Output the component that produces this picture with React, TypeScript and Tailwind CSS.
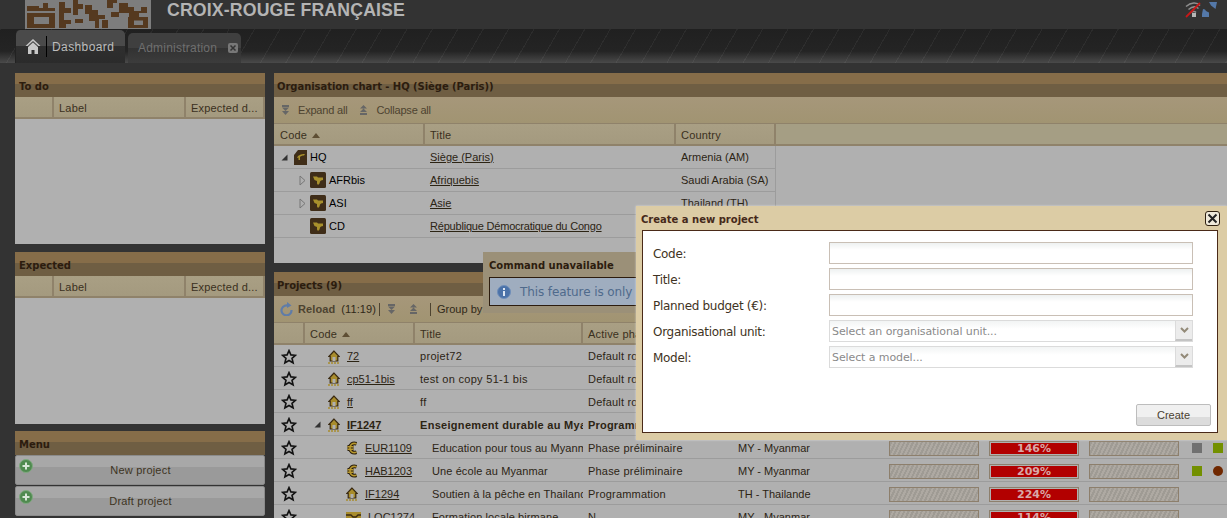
import React from "react";

const sans = "font-['Liberation_Sans',Arial,sans-serif]";
const dv = "font-['DejaVu_Sans',Verdana,sans-serif]";

function Star() {
  return (
    <svg width="16" height="16" viewBox="0 0 16 16" className="shrink-0">
      <path d="M8 1.600l1.900 4.300 4.600.4-3.500 3 1.100 4.600L8 11.500l-4.100 2.400 1.100-4.600-3.500-3 4.600-.4z" fill="none" stroke="#111" strokeWidth="1.600" />
    </svg>
  );
}
function HouseIcon() {
  return (
    <svg width="12" height="14" viewBox="0 0 12 14" className="shrink-0">
      <path d="M6 1L.8 6.500h1.400V11h7.600V6.500h1.400z" fill="#a88c2c" stroke="#3a2a12" strokeWidth="1.200" />
      <rect x="4.500" y="7" width="3" height="4" fill="#b0b0b0" />
      <path d="M0 13h12" stroke="#a88c2c" strokeWidth="1.400" strokeDasharray="2 1" />
    </svg>
  );
}
function EuroIcon() {
  const d = "M10.500 2.800C6.500 1.500 4 3.500 4 7s2.500 5.500 6.500 4.200M1.500 5.800h6M1.500 8.200h6";
  return (
    <svg width="12" height="14" viewBox="0 0 12 14" className="shrink-0">
      <path d={d} fill="none" stroke="#2a1e0c" strokeWidth="3.600" />
      <path d={d} fill="none" stroke="#b8982e" strokeWidth="1.600" />
    </svg>
  );
}
function HandsIcon() {
  return (
    <svg width="15" height="10" viewBox="0 0 15 10" className="shrink-0">
      <rect width="15" height="10" fill="#a88c2c" />
      <path d="M0 3h5l2 2h3l2-2h3M3 7h9" stroke="#3a2a12" strokeWidth="1.300" fill="none" />
    </svg>
  );
}
function HqIcon() {
  return (
    <svg width="15" height="17" viewBox="0 0 15 17" className="shrink-0">
      <path d="M1 16V6L5 1h9v15z" fill="#3f2d18" />
      <path d="M4 9c1-3 4-4 8-4l-1 1.500c-2 0-3 .5-4 1.500v3H5.500V8.500z" fill="#a8902c" />
    </svg>
  );
}
function UnitIcon() {
  return (
    <svg width="16" height="16" viewBox="0 0 16 16" className="shrink-0">
      <rect width="16" height="16" rx="1.500" fill="#3f2d18" />
      <path d="M3 4.500h4l1 1h5v2.500l-2 .5-1 1-.5 2-1.500 1.500-1-1.500V9L4.500 8z" fill="#a8902c" />
    </svg>
  );
}
function Arrow({ open }: { open: boolean }) {
  return open ? (
    <svg width="7" height="7" viewBox="0 0 7 7" className="shrink-0"><path d="M6.500.5v6H.5z" fill="#333" /></svg>
  ) : (
    <svg width="7" height="11" viewBox="0 0 7 11" className="shrink-0"><path d="M1 1l5 4.500-5 4.500z" fill="none" stroke="#777" /></svg>
  );
}
function SortUp() {
  return <svg width="8" height="5" viewBox="0 0 8 5" className="shrink-0"><path d="M4 0l4 5H0z" fill="#5e4e34" /></svg>;
}
function ExpandIcon({ up }: { up?: boolean }) {
  return (
    <svg width="9" height="10" viewBox="0 0 9 10" className="shrink-0">
      {up ? (
        <path d="M4.500 0L8 3.500H1zM4.500 3.500L8 7H1zM1 8h7v2H1z" fill="#666" />
      ) : (
        <path d="M1 0h7v2H1zM1 2.500h7L4.500 6zM1 6h7L4.500 10z" fill="#666" />
      )}
    </svg>
  );
}
function PlusIcon() {
  return (
    <svg width="14" height="14" viewBox="0 0 14 14" className="absolute left-[3px] top-[3px]">
      <circle cx="7" cy="7" r="6.500" fill="#4f8a4f" stroke="#7ea87e" />
      <path d="M7 3.500v7M3.500 7h7" stroke="#d8e6d8" strokeWidth="2" />
    </svg>
  );
}

function Band({ title, tight }: { title: string; tight?: boolean }) {
  return (
    <div className={`h-[24px] shrink-0 flex items-center ${tight ? "pl-[3px] tracking-[-0.05px]" : "pl-[4px]"} pt-[3px] bg-[linear-gradient(#866d49_0,#866d49_45%,#6f5e43_45%,#6f5e43_100%)] ${dv} font-bold text-[10px] text-[#2c1c0e]`}>
      {title}
    </div>
  );
}

function HeadCell({ w, children, className = "" }: { w: string; children?: React.ReactNode; className?: string }) {
  return (
    <div className={`${w} shrink-0 h-full flex items-center gap-[5px] pl-[5px] pt-[2px] border-r-2 border-[#8f826a] bg-[linear-gradient(#a99f84,#a49a7f)] overflow-hidden whitespace-nowrap ${className}`}>
      {children}
    </div>
  );
}

function SidePanel({ title, bodyH, className = "" }: { title: string; bodyH: string; className?: string }) {
  return (
    <section className={`w-[250px] shrink-0 ${className}`}>
      <Band title={title} />
      <div className={`h-[22px] flex border-b-2 border-[#8f826a] ${sans} text-[11px] text-[#3a3020] tracking-[0.2px]`}>
        <HeadCell w="w-[39px]" />
        <HeadCell w="w-[132px]">Label</HeadCell>
        <HeadCell w="w-[79px]" className="border-r-0">Expected d...</HeadCell>
      </div>
      <div className={`${bodyH} bg-[#b0b0b0]`} />
    </section>
  );
}

function MenuBtn({ label }: { label: string }) {
  return (
    <div className={`relative h-[30px] shrink-0 mb-[1px] border border-[#8b8b8b] rounded-[2px] flex items-center justify-center bg-[linear-gradient(#a8a8a8_0,#a8a8a8_40%,#9a9a9a_40%,#9a9a9a_100%)] ${sans} text-[11px] text-[#3d3423] tracking-[0.2px] pl-[1px]`}>
      <PlusIcon />
      {label}
    </div>
  );
}

const orgRows = [
  { code: "HQ", title: "Siège (Paris)", country: "Armenia (AM)", indent: "pl-[7px]", arrow: "open", hq: true, tt: "" },
  { code: "AFRbis", title: "Afriquebis", country: "Saudi Arabia (SA)", indent: "pl-[25px]", arrow: "closed", tt: "" },
  { code: "ASI", title: "Asie", country: "Thailand (TH)", indent: "pl-[25px]", arrow: "closed", tt: "" },
  { code: "CD", title: "République Démocratique du Congo", country: "", indent: "pl-[36px]", arrow: "", tt: "tracking-[-0.2px]" },
];

function OrgRow({ r }: { r: (typeof orgRows)[number] }) {
  return (
    <div className={`w-[502px] h-[23px] shrink-0 flex items-center border-b border-r border-[#9c9c9c] ${sans} text-[11px] text-[#2c2414]`}>
      <div className={`w-[150px] shrink-0 flex items-center ${r.indent}`}>
        {r.arrow === "open" && <span className="mr-[5px]"><Arrow open /></span>}
        {r.arrow === "closed" && <span className="mr-[4px]"><Arrow open={false} /></span>}
        {r.hq ? <HqIcon /> : <UnitIcon />}
        <span className={`${r.hq ? "ml-[2px]" : "ml-[3px]"} text-black`}>{r.code}</span>
      </div>
      <div className={`w-[251px] shrink-0 pl-[6px] underline ${r.tt}`}>{r.title}</div>
      <div className="w-[100px] shrink-0 pl-[6px]">{r.country}</div>
    </div>
  );
}

function Bar({ value }: { value?: string }) {
  if (value) {
    return (
      <div className="w-[90px] h-[15px] shrink-0 border border-[#8d7f6c] p-[1px]">
        <div className={`h-full bg-[#b20000] flex items-center justify-center ${dv} text-[11px] font-bold text-[#d8a8a8] leading-none`}>{value}</div>
      </div>
    );
  }
  return (
    <div className="w-[90px] h-[15px] shrink-0 border border-[#8d7f6c] bg-[repeating-linear-gradient(115deg,#9f9b94_0,#9f9b94_2px,#aea9a2_2px,#aea9a2_4px)]" />
  );
}

type P = {
  code: string; title: string; phase: string; country?: string; icon: "h" | "e" | "t"; sub?: boolean; bold?: boolean; open?: boolean;
  pct?: string; a?: string; b?: string; bRound?: boolean;
};
const projects: P[] = [
  { code: "72", title: "projet72", phase: "Default ro", icon: "h" },
  { code: "cp51-1bis", title: "test on copy 51-1 bis", phase: "Default ro", icon: "h" },
  { code: "ff", title: "ff", phase: "Default ro", icon: "h" },
  { code: "IF1247", title: "Enseignement durable au Myanmar", phase: "Programmation", icon: "h", bold: true, open: true },
  { code: "EUR1109", title: "Education pour tous au Myanmar", phase: "Phase préliminaire", country: "MY - Myanmar", icon: "e", sub: true, pct: "146%", a: "bg-[#707070]", b: "bg-[#739000]" },
  { code: "HAB1203", title: "Une école au Myanmar", phase: "Phase préliminaire", country: "MY - Myanmar", icon: "e", sub: true, pct: "209%", a: "bg-[#739000]", b: "bg-[#702800]", bRound: true },
  { code: "IF1294", title: "Soutien à la pêche en Thailande", phase: "Programmation", country: "TH - Thailande", icon: "h", sub: true, pct: "224%" },
  { code: "LOC1274", title: "Formation locale birmane", phase: "N", country: "MY - Myanmar", icon: "t", sub: true, pct: "114%" },
];

function ProjectRow({ p }: { p: P }) {
  return (
    <div className={`h-[23px] first:h-[22px] shrink-0 flex items-center pt-[2px] border-b border-[#9c9c9c] bg-[#b0b0b0] ${sans} text-[11px] text-[#2c2414] ${p.bold ? "font-bold" : ""}`}>
      <div className="w-[30px] shrink-0 flex justify-center"><Star /></div>
      <div className={`w-[111px] shrink-0 flex items-center relative ${p.sub ? "pl-[42px]" : "pl-[24px]"}`}>
        {p.open && <span className="absolute left-[10px] top-[4px]"><Arrow open /></span>}
        {p.icon === "h" && <HouseIcon />}
        {p.icon === "e" && <EuroIcon />}
        {p.icon === "t" && <HandsIcon />}
        <span className="underline whitespace-nowrap ml-[7px]">{p.code}</span>
      </div>
      <div className={`w-[168px] shrink-0 overflow-hidden whitespace-nowrap ${p.sub ? "pl-[17px] tracking-[0.1px]" : "pl-[5px] tracking-[0.3px]"}`}>{p.title}</div>
      <div className="w-[155px] shrink-0 pl-[5px] overflow-hidden whitespace-nowrap tracking-[0.2px]">{p.phase}</div>
      <div className="w-[151px] shrink-0 whitespace-nowrap">{p.country}</div>
      <div className="flex gap-[10px] items-center shrink-0">
        <Bar />
        <Bar value={p.pct} />
        <Bar />
      </div>
      <div className="flex items-center gap-[11px] pl-[13px]">
        {p.a && <span className={`w-[10px] h-[10px] ${p.a}`} />}
        {p.b && <span className={`w-[10px] h-[10px] ${p.b} ${p.bRound ? "rounded-full" : ""}`} />}
      </div>
    </div>
  );
}

function Field({ label, select }: { label: string; select?: string }) {
  return (
    <div className="h-[26px] flex items-center">
      <div className={`w-[176px] shrink-0 pt-[1px] ${dv} text-[12px] text-[#3f3323] tracking-[-0.3px] whitespace-nowrap`}>{label}</div>
      {select ? (
        <div className="w-[364px] h-[22px] flex border border-[#dbdbdb] bg-[linear-gradient(#f2f4f4,#ffffff_40%)]">
          <div className={`flex-1 pl-[2px] ${dv} text-[11px] leading-[21px] text-[#8a8a8a] tracking-[-0.1px] whitespace-nowrap`}>{select}</div>
          <div className="w-[17px] border-l border-[#dbdbdb] border-b-2 border-b-[#c4c4c4] bg-[#ececec] flex items-center justify-center">
            <svg width="9" height="6" viewBox="0 0 9 6"><path d="M1 1l3.500 3.500L8 1" fill="none" stroke="#938a78" strokeWidth="2" /></svg>
          </div>
        </div>
      ) : (
        <div className="w-[364px] h-[22px] border border-[#c9bfb5] bg-[linear-gradient(#eef1f1,#ffffff_35%)]" />
      )}
    </div>
  );
}

export default function App() {
  return (
    <div className={`relative w-[1227px] h-[518px] overflow-hidden bg-[#333333] ${sans} flex flex-col`}>
      <header className="h-[29px] shrink-0 flex items-start relative">
        <div className="ml-[25px] w-[126px] h-[29px] bg-[#7d7d7d] overflow-hidden">
          <svg width="126" height="29" viewBox="0 0 126 29">
            <path fillRule="evenodd" d="M2 13h28v15H2zM9 17v7h15v-7zM2 6h12v2h4V3h5v5h7v3H2zM34 2h6v6h6v5h-7v7h7v4h-5v4h-7zM48 0h5v4h5v5h-5v6h-5zM50 19h8v4h-8zM60 5h7v5h6v5h7v4h-6v9h-4v-7h-6v-7h-4zM82 0h10v3h-4v5h-6zM77 20h6v8h-6zM86 12h8v5h-8zM94 3h9v4h6v4h7v-4h6v6h-8v4h-10v-4h-10zM103 17h20v11H103zM109 20.500v4.500h9v-4.500z" fill="#55391f" />
          </svg>
        </div>
        <div className={`ml-[16px] ${sans} font-bold text-[17.7px] leading-[20px] text-[#b4b4b4] tracking-[0.15px]`}>CROIX-ROUGE FRANÇAISE</div>
        <div className="absolute right-0 top-0 w-[42px] h-[20px]">
          <svg width="42" height="20" viewBox="0 0 42 20">
            <path d="M1 6.500C6 2 12 2 15 5.500M3.500 9.500C7 6.500 11 6.500 13.500 8.500M6 12.500c2-1.500 4-1.500 5 0" fill="none" stroke="#8f8f8f" strokeWidth="1.500" />
            <rect x="7" y="13" width="4" height="4" fill="#b5b5b5" />
            <path d="M1 17L15 3" stroke="#c81818" strokeWidth="1.800" />
            <path d="M18 9l2 .5 1 1.500 3 1.500V17h-7v-3z" fill="#5478a8" />
            <path d="M24 2h8l-1.500 7-2.500-2-2-1.500z" fill="#5478a8" />
          </svg>
        </div>
      </header>

      <nav className="h-[34px] shrink-0 flex items-end pl-[15px] gap-[3px] bg-[repeating-linear-gradient(120deg,rgba(255,255,255,0.05)_0,rgba(255,255,255,0.05)_1px,transparent_1px,transparent_22px),linear-gradient(#202020_0,#242424_65%,#4a4a4a_100%)]">
        <div className="w-[110px] h-[33px] bg-[linear-gradient(#4a4a4a_0,#4a4a4a_47%,#2f2f2f_47%,#2b2b2b_100%)] rounded-t-[5px] flex items-center border-l border-[#222]">
          <svg width="16" height="17" viewBox="0 0 16 17" className="ml-[9px] mt-[-1px] shrink-0">
            <path d="M8 1L.5 8h2L8 3l5.500 5h2z" fill="#c8c8c8" />
            <path d="M3 9l5-4.500L13 9v7H9.500v-4h-3v4H3z" fill="#c8c8c8" />
          </svg>
          <span className="w-px h-[21px] bg-black ml-[5px]" />
          <span className="ml-[5px] text-[12px] text-[#bdbdbd] tracking-[0.4px]">Dashboard</span>
        </div>
        <div className="w-[113px] h-[30px] bg-[linear-gradient(#3f3f3f_0,#3f3f3f_50%,#323232_50%,#3c3c3c_100%)] rounded-t-[5px] flex items-center">
          <span className="ml-[10px] text-[12px] text-[#6f6f6f] tracking-[0.22px]">Administration</span>
          <svg width="10" height="10" viewBox="0 0 10 10" className="ml-[11px] shrink-0">
            <rect width="10" height="10" rx="2" fill="#777" />
            <path d="M2.500 2.500l5 5M7.500 2.500l-5 5" stroke="#333" strokeWidth="1.500" />
          </svg>
        </div>
      </nav>

      <main className="flex-1 min-h-0 flex gap-[9px] pl-[15px] pt-[10px]">
        <div className="w-[250px] shrink-0 flex flex-col gap-[7px] overflow-hidden">
          <SidePanel title="To do" bodyH="h-[125px]" />
          <SidePanel title="Expected" bodyH="h-[126px]" className="mt-[1px]" />
          <section className="shrink-0">
            <Band title="Menu" />
            <MenuBtn label="New project" />
            <MenuBtn label="Draft project" />
          </section>
        </div>

        <div className="flex-1 min-w-0 flex flex-col gap-[9px]">
          <section className="h-[190px] shrink-0 flex flex-col bg-[#b0b0b0]">
            <Band title="Organisation chart - HQ (Siège (Paris))" tight />
            <div className={`h-[26px] shrink-0 flex items-center pl-[7px] bg-[linear-gradient(#a6977a,#a19472)] ${sans} text-[11px] text-[#4d4330] tracking-[-0.2px]`}>
              <ExpandIcon />
              <span className="ml-[8px]">Expand all</span>
              <span className="ml-[12px]"><ExpandIcon up /></span>
              <span className="ml-[8px]">Collapse all</span>
            </div>
            <div className={`h-[23px] shrink-0 flex border-y border-b-2 border-[#8f826a] bg-[#a59e84] ${sans} text-[11px] text-[#3a3020] tracking-[0.2px]`}>
              <HeadCell w="w-[151px]"><span className="ml-[1px]">Code</span> <SortUp /></HeadCell>
              <HeadCell w="w-[251px]">Title</HeadCell>
              <HeadCell w="w-[100px]">Country</HeadCell>
            </div>
            {orgRows.map((r) => <OrgRow key={r.code} r={r} />)}
          </section>

          <section className="flex-1 min-h-0 flex flex-col overflow-hidden">
            <Band title="Projects (9)" tight />
            <div className={`h-[26px] shrink-0 flex items-center pl-[6px] bg-[linear-gradient(#a6977a,#a19472)] ${sans} text-[11px] text-[#2f2818]`}>
              <svg width="13" height="14" viewBox="0 0 13 14" className="shrink-0">
                <path d="M9 4A5 5 0 1 0 11.500 8" fill="none" stroke="#5f7ca8" strokeWidth="2.200" />
                <path d="M7 0l4.500 3.500L7 6z" fill="#5f7ca8" />
              </svg>
              <span className="ml-[5px] font-bold text-[#4d4330] tracking-[0.1px]">Reload</span>
              <span className="ml-[6px] tracking-[0.1px]">(11:19)</span>
              <span className="w-px h-[13px] bg-[#4d4330] ml-[3px]" />
              <span className="ml-[7px]"><ExpandIcon /></span>
              <span className="ml-[13px]"><ExpandIcon up /></span>
              <span className="w-px h-[13px] bg-[#4d4330] ml-[12px]" />
              <span className="ml-[6px]">Group by</span>
            </div>
            <div className={`h-[23px] shrink-0 flex border-y border-b-2 border-[#8f826a] bg-[#a49a7f] ${sans} text-[11px] text-[#3a3020] tracking-[0.2px]`}>
              <HeadCell w="w-[31px]" />
              <HeadCell w="w-[110px]">Code <SortUp /></HeadCell>
              <HeadCell w="w-[168px]">Title</HeadCell>
              <HeadCell w="w-[150px]">Active phase</HeadCell>
            </div>
            <div className="flex flex-col">
              {projects.map((p) => <ProjectRow key={p.code} p={p} />)}
            </div>
          </section>
        </div>
      </main>

      <div className="absolute left-[483px] top-[252px] w-[160px] h-[61px] bg-[#9b9078] pl-[6px] z-10">
        <div className={`h-[25px] pt-[2px] flex items-center ${dv} font-bold text-[10px] text-[#2c1c0e] whitespace-nowrap`}>Command unavailable</div>
        <div className="h-[29px] w-[200px] border border-[#2c1c0e] bg-[#9fadbf] flex items-center pl-[7px]">
          <svg width="14" height="14" viewBox="0 0 14 14" className="shrink-0">
            <circle cx="7" cy="7" r="6.500" fill="#4b72a8" stroke="#6f8fba" />
            <rect x="6" y="3" width="2" height="2" fill="#dde6f2" />
            <rect x="6" y="6" width="2" height="5" fill="#dde6f2" />
          </svg>
          <span className={`ml-[9px] ${dv} text-[12px] text-[#4f6a8c] whitespace-nowrap tracking-[-0.1px]`}>This feature is only available online.</span>
        </div>
      </div>

      <div className="absolute left-[636px] top-[206px] w-[591px] h-[234px] bg-[#dccca5] z-20 shadow-[0_0_2px_rgba(255,255,255,0.6)]">
        <div className={`h-[24px] pt-[2px] flex items-center pl-[5px] ${dv} font-bold text-[10px] text-[#45291a]`}>Create a new project</div>
        <div className="absolute right-[7px] top-[5px] w-[15px] h-[15px] rounded-[3px] border border-[#2f2010] bg-[#efe9da] flex items-center justify-center">
          <svg width="11" height="11" viewBox="0 0 11 11"><path d="M1.500 1.500l8 8M9.500 1.500l-8 8" stroke="#222" strokeWidth="2" /></svg>
        </div>
        <div className="absolute left-[6px] top-[24px] w-[576px] h-[203px] border border-[#4a2a18] bg-white">
          <div className="pl-[10px] pt-[9px]">
            <Field label="Code:" />
            <Field label="Title:" />
            <Field label="Planned budget (€):" />
            <Field label="Organisational unit:" select="Select an organisational unit..." />
            <Field label="Model:" select="Select a model..." />
          </div>
          <div className={`absolute right-[6px] bottom-[6px] w-[75px] h-[22px] rounded-[2px] border border-[#bdbdbd] bg-[linear-gradient(#f0f0f0_0,#f0f0f0_60%,#dcdcdc_60%,#dcdcdc_100%)] flex items-center justify-center ${sans} text-[11px] text-[#4a4030]`}>Create</div>
        </div>
      </div>
    </div>
  );
}
